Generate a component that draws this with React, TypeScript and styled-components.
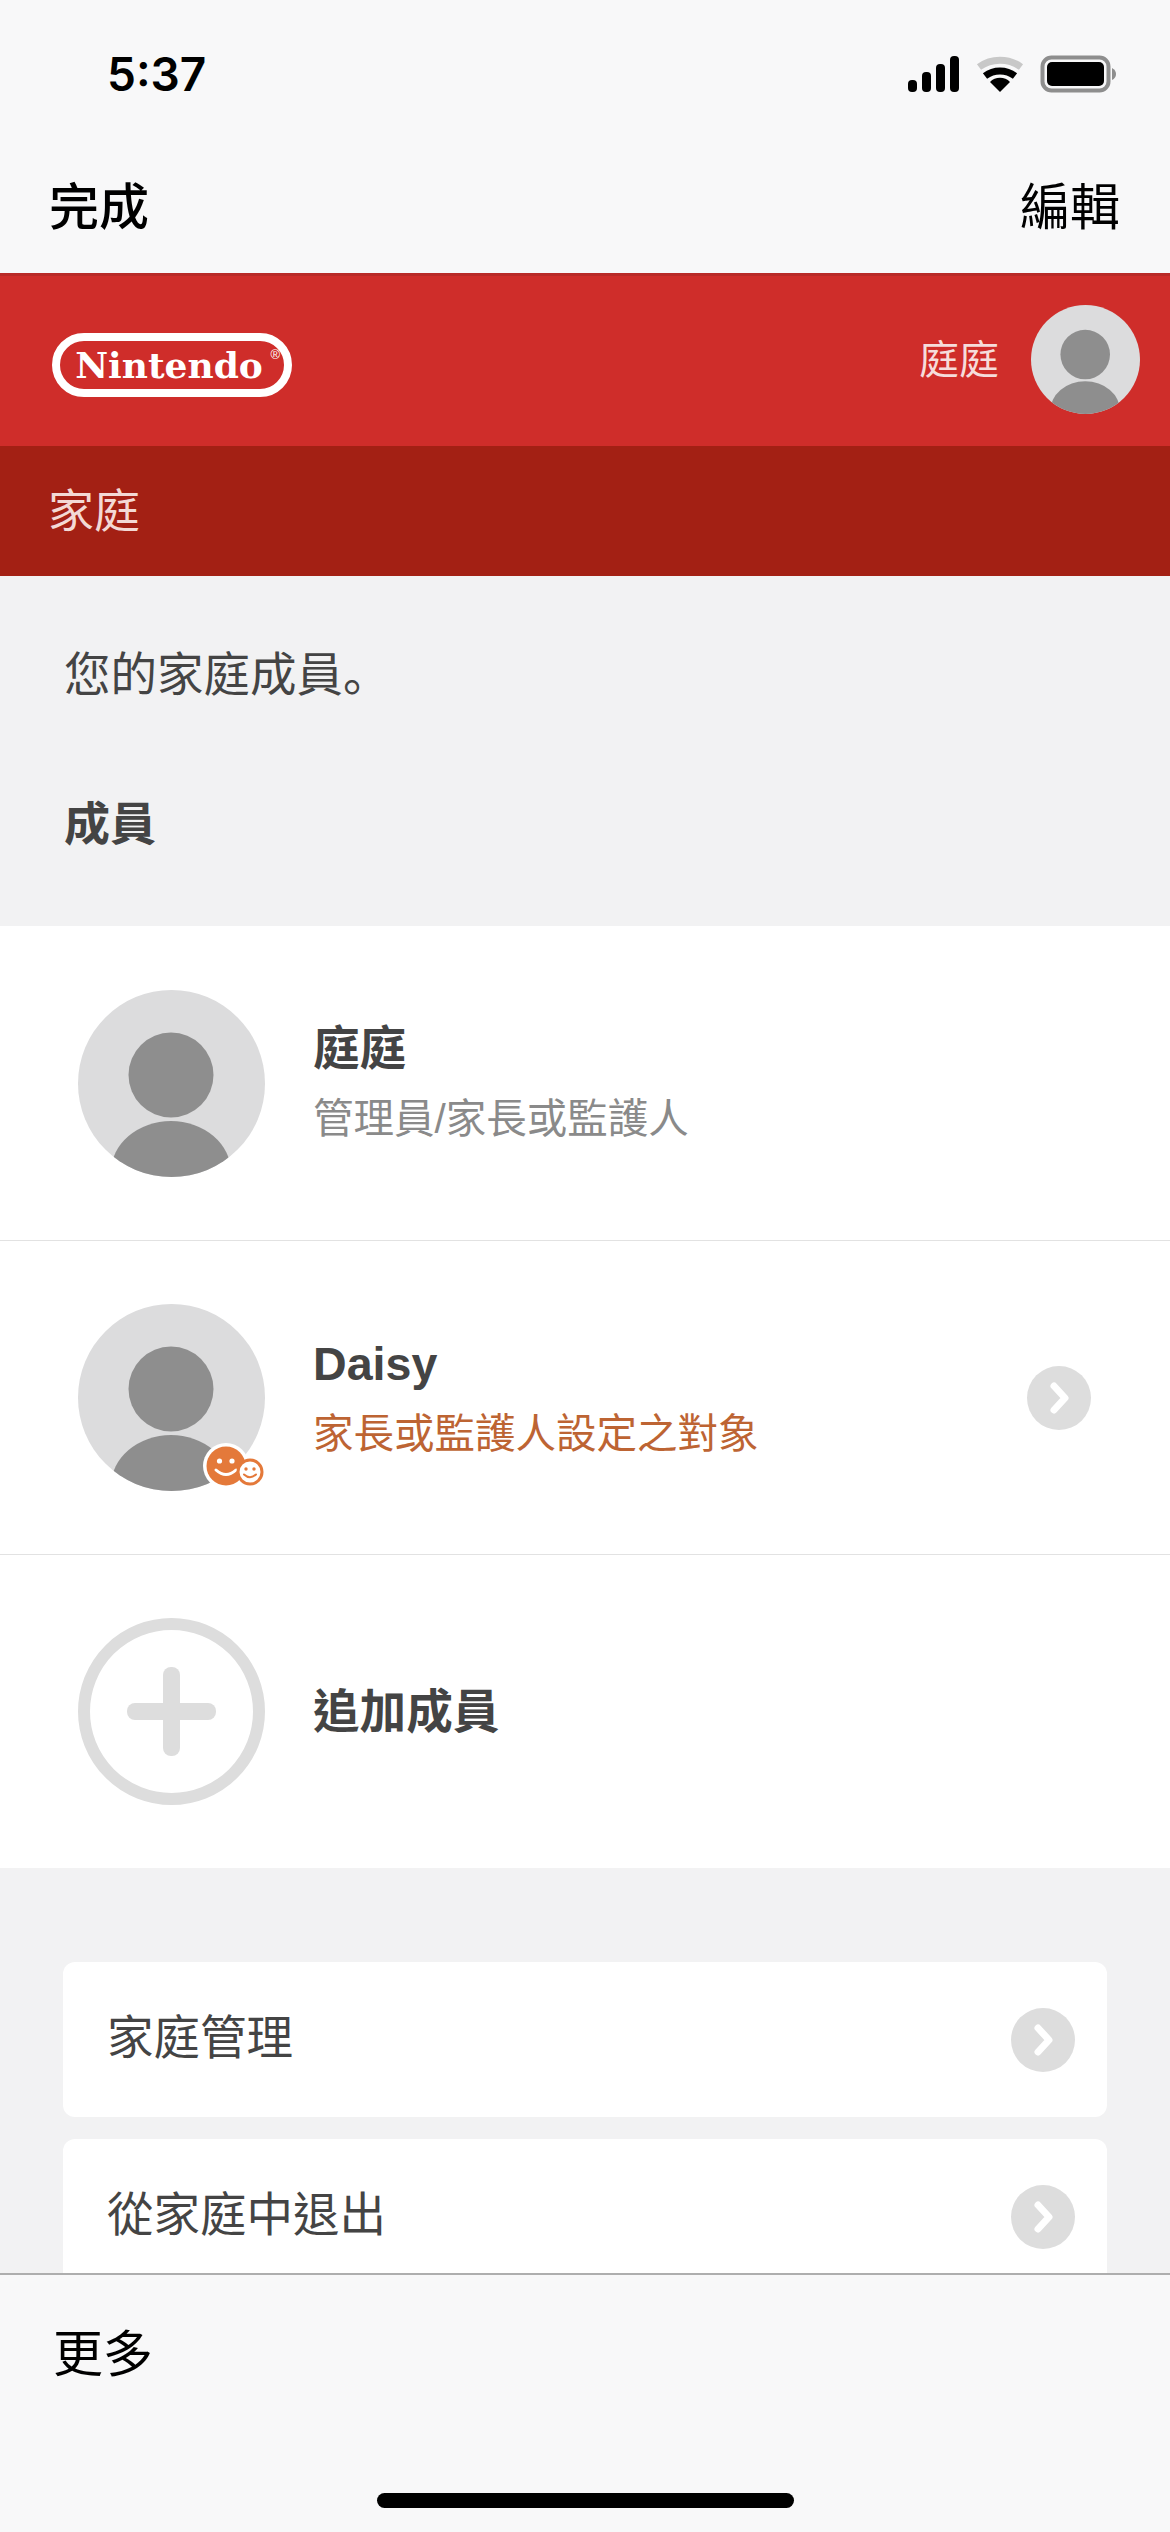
import React from 'react';
import styled, { createGlobalStyle } from 'styled-components';

const CJK = `"Liberation Sans", "Noto Sans CJK TC", sans-serif`;

const GlobalStyle = createGlobalStyle`
  html, body {
    margin: 0;
    padding: 0;
    background: #f2f2f3;
    font-family: ${CJK};
  }
  * {
    box-sizing: border-box;
  }
`;

const Screen = styled.div`
  width: 1170px;
  height: 2532px;
  display: flex;
  flex-direction: column;
  overflow: hidden;
  background: #f2f2f3;
`;
const Chrome = styled.header`
  flex: none;
  height: 273px;
  background: #f8f8f9;
`;
const StatusBar = styled.div`
  height: 148px;
  display: flex;
  align-items: center;
  justify-content: space-between;
  padding: 0 54px 0 107px;
`;
const Clock = styled.span`
  font-family: Inter, "Liberation Sans", sans-serif;
  font-size: 46px;
  font-weight: 600;
  color: #000;
`;
const StatusIcons = styled.svg`
  display: block;
`;
const NavRow = styled.div`
  height: 116px;
  display: flex;
  align-items: center;
  justify-content: space-between;
  padding: 0 50px 6px 49px;
  font-size: 50px;
  color: #000;
`;
const Done = styled.span`
  font-weight: 500;
`;

const Main = styled.main`
  flex: 1;
  min-height: 0;
  overflow: hidden;
`;
const RedHeader = styled.div`
  height: 173px;
  background: #cf2d2a;
  border-top: 3px solid #b92a27;
  display: flex;
  align-items: center;
  justify-content: space-between;
  padding: 0 30px 0 52px;
`;
const Logo = styled.div`
  position: relative;
  width: 240px;
  height: 64px;
  margin-top: 8px;
  border: 8px solid #fff;
  border-radius: 32px;
  display: flex;
  align-items: center;
  justify-content: center;
  padding-right: 6px;
  color: #fff;
  font-family: "DejaVu Serif", serif;
  font-weight: 700;
  font-size: 36px;
  letter-spacing: 0;
  line-height: 1;
`;
const Registered = styled.span`
  position: absolute;
  right: 4px;
  top: 7px;
  font-family: "Liberation Sans", sans-serif;
  font-size: 13px;
  font-weight: 400;
`;
const Account = styled.div`
  display: flex;
  align-items: center;
  gap: 32px;
  padding-bottom: 3px;
  color: #f6dcdb;
  font-size: 40px;
`;
const AccountName = styled.span`
  margin-bottom: 6px;
`;
const SubHeader = styled.div`
  height: 130px;
  background: #a32014;
  color: #f3d9d5;
  font-size: 46px;
  display: flex;
  align-items: center;
  padding: 0 0 8px 48px;
`;
const AvatarSvg = styled.svg`
  display: block;
  flex: none;
`;

const Intro = styled.section`
  padding: 69px 64px 72px;
  color: #444;
  font-size: 46.5px;
  line-height: 60px;
`;
const IntroText = styled.p`
  margin: 0 0 89px;
`;
const FullStop = styled.span`
  font-family: "Noto Sans CJK JP", sans-serif;
  line-height: 0;
`;
const SectionTitle = styled.h2`
  margin: 0;
  font-size: 46px;
  line-height: 60px;
  font-weight: 700;
`;

const Members = styled.section`
  background: #fff;
`;
const MemberRow = styled.div`
  height: 314px;
  display: flex;
  align-items: center;
  padding: 0 79px 0 78px;
  gap: 48px;
  & + & {
    border-top: 1px solid #e2e2e2;
  }
`;
const AvatarWrap = styled.div`
  position: relative;
  flex: none;
  width: 187px;
  height: 187px;
`;
const Badge = styled.svg`
  position: absolute;
  left: 125px;
  top: 137px;
`;
const MemberInfo = styled.div`
  flex: 1;
  display: flex;
  flex-direction: column;
  gap: 12px;
`;
const MemberName = styled.div`
  font-size: 46.6px;
  line-height: 60px;
  font-weight: 700;
  color: #444;
`;
const MemberRole = styled.div<{ $accent?: boolean }>`
  font-size: 40.5px;
  line-height: 56px;
  color: ${({ $accent }) => ($accent ? '#bd6433' : '#8a8a8a')};
`;

const Actions = styled.section`
  padding: 94px 63px 0;
  display: flex;
  flex-direction: column;
  gap: 22px;
`;
const ActionCard = styled.div`
  height: 155px;
  background: #fff;
  border-radius: 12px;
  display: flex;
  align-items: center;
  justify-content: space-between;
  padding: 0 32px 0 44px;
  color: #444;
  font-size: 46.5px;
`;
const ActionLabel = styled.span`
  margin-bottom: 12px;
`;

const TabBar = styled.footer`
  flex: none;
  height: 259px;
  background: #f8f8f9;
  border-top: 2px solid #aeaeae;
  padding: 50px 0 0 53px;
  position: relative;
  font-size: 50px;
  line-height: 60px;
  color: #000;
`;
const HomeIndicator = styled.div`
  position: absolute;
  left: 377px;
  bottom: 24px;
  width: 417px;
  height: 15px;
  border-radius: 8px;
  background: #000;
`;

function PersonAvatar({ size }: { size: number }) {
  const clipId = `avatar-clip-${size}`;
  return (
    <AvatarSvg width={size} height={size} viewBox="0 0 187 187">
      <defs>
        <clipPath id={clipId}>
          <circle cx="93.5" cy="93.5" r="93.5" />
        </clipPath>
      </defs>
      <circle cx="93.5" cy="93.5" r="93.5" fill="#dcdcdd" />
      <g clipPath={`url(#${clipId})`} fill="#8e8e8e">
        <circle cx="93" cy="85" r="42.5" />
        <ellipse cx="93" cy="182" rx="60" ry="51" />
      </g>
    </AvatarSvg>
  );
}

function ChevronButton() {
  return (
    <svg width="64" height="64" viewBox="0 0 64 64" style={{ flex: 'none' }}>
      <circle cx="32" cy="32" r="32" fill="#dddddd" />
      <path
        d="M27 20 L38 32 L27 44"
        fill="none"
        stroke="#fff"
        strokeWidth="7"
        strokeLinecap="round"
        strokeLinejoin="round"
      />
    </svg>
  );
}

function ParentalBadge() {
  return (
    <Badge width="64" height="52" viewBox="0 0 64 52">
      <circle cx="23" cy="25" r="23" fill="#fff" />
      <circle cx="23" cy="25" r="19.5" fill="#e4793a" />
      <circle cx="16.5" cy="20" r="2.6" fill="#fff" />
      <circle cx="29" cy="20" r="2.6" fill="#fff" />
      <path d="M13 29 Q23 38 33 29" fill="none" stroke="#fff" strokeWidth="3" strokeLinecap="round" />
      <circle cx="47" cy="31" r="12" fill="#fff" stroke="#e4793a" strokeWidth="3" />
      <circle cx="43" cy="28" r="1.7" fill="#e4793a" />
      <circle cx="51" cy="28" r="1.7" fill="#e4793a" />
      <path d="M41 33.5 Q47 39 53 33.5" fill="none" stroke="#e4793a" strokeWidth="2" strokeLinecap="round" />
    </Badge>
  );
}

function StatusGlyphs() {
  return (
    <StatusIcons width="208" height="38" viewBox="0 0 208 38">
      <g fill="#000">
        <rect x="0" y="25" width="9" height="12" rx="4" />
        <rect x="14" y="17" width="9" height="20" rx="4" />
        <rect x="28" y="9" width="9" height="28" rx="4" />
        <rect x="42" y="1" width="9" height="36" rx="4" />
      </g>
      <path d="M71 10 A36 36 0 0 1 113 10" transform="translate(0 2)" fill="none" stroke="#c8c8c8" strokeWidth="7" strokeLinecap="butt" />
      <path d="M77 22 A25 25 0 0 1 107 22" transform="translate(0 -1)" fill="none" stroke="#000" strokeWidth="7" />
      <path d="M92 37 L82 27 A14 14 0 0 1 102 27 Z" fill="#000" />
      <rect x="134.5" y="2.5" width="66" height="33" rx="9" fill="none" stroke="#8e8e8e" strokeWidth="4" />
      <rect x="139" y="7" width="57" height="24" rx="5" fill="#000" />
      <path d="M204 13 Q208 15 208 19 Q208 23 204 25 Z" fill="#8e8e8e" />
    </StatusIcons>
  );
}

function AddIcon() {
  return (
    <AvatarSvg width="187" height="187" viewBox="0 0 187 187">
      <circle cx="93.5" cy="93.5" r="87.5" fill="none" stroke="#dddddd" strokeWidth="12" />
      <rect x="49" y="85" width="89" height="17" rx="8" fill="#dddddd" />
      <rect x="85" y="49" width="17" height="89" rx="8" fill="#dddddd" />
    </AvatarSvg>
  );
}

export default function App() {
  return (
    <>
      <GlobalStyle />
      <Screen>
        <Chrome>
          <StatusBar>
            <Clock>5:37</Clock>
            <StatusGlyphs />
          </StatusBar>
          <NavRow>
            <Done>完成</Done>
            <span>編輯</span>
          </NavRow>
        </Chrome>
        <Main>
          <RedHeader>
            <Logo>
              Nintendo
              <Registered>®</Registered>
            </Logo>
            <Account>
              <AccountName>庭庭</AccountName>
              <PersonAvatar size={109} />
            </Account>
          </RedHeader>
          <SubHeader>家庭</SubHeader>
          <Intro>
            <IntroText>
              您的家庭成員<FullStop>。</FullStop>
            </IntroText>
            <SectionTitle>成員</SectionTitle>
          </Intro>
          <Members>
            <MemberRow>
              <AvatarWrap>
                <PersonAvatar size={187} />
              </AvatarWrap>
              <MemberInfo>
                <MemberName>庭庭</MemberName>
                <MemberRole>管理員/家長或監護人</MemberRole>
              </MemberInfo>
            </MemberRow>
            <MemberRow>
              <AvatarWrap>
                <PersonAvatar size={187} />
                <ParentalBadge />
              </AvatarWrap>
              <MemberInfo>
                <MemberName>Daisy</MemberName>
                <MemberRole $accent>家長或監護人設定之對象</MemberRole>
              </MemberInfo>
              <ChevronButton />
            </MemberRow>
            <MemberRow>
              <AvatarWrap>
                <AddIcon />
              </AvatarWrap>
              <MemberInfo>
                <MemberName>追加成員</MemberName>
              </MemberInfo>
            </MemberRow>
          </Members>
          <Actions>
            <ActionCard>
              <ActionLabel>家庭管理</ActionLabel>
              <ChevronButton />
            </ActionCard>
            <ActionCard>
              <ActionLabel>從家庭中退出</ActionLabel>
              <ChevronButton />
            </ActionCard>
          </Actions>
        </Main>
        <TabBar>
          更多
          <HomeIndicator />
        </TabBar>
      </Screen>
    </>
  );
}
